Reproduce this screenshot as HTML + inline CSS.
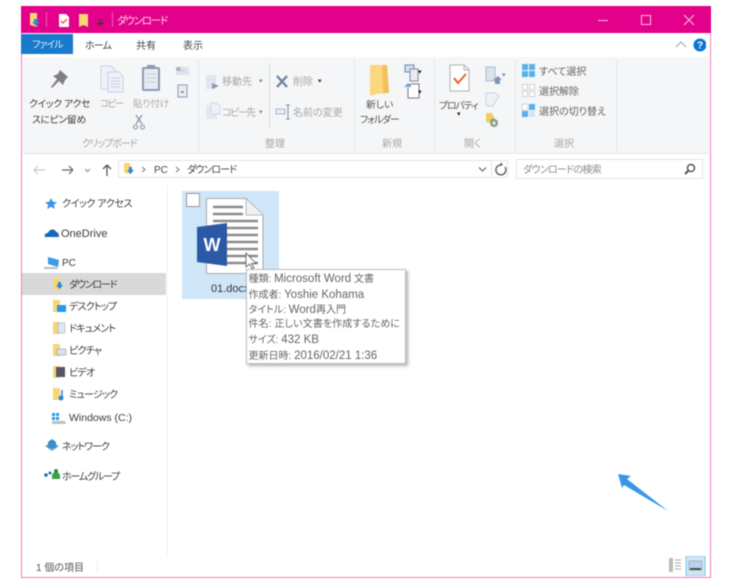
<!DOCTYPE html>
<html lang="ja"><head><meta charset="utf-8"><style>
html,body{margin:0;padding:0;background:#fff}
#p{position:relative;width:756px;height:586px;overflow:hidden;background:#fff;font-family:"Liberation Sans","Noto Sans CJK JP",sans-serif;font-size:10px;color:#444;filter:blur(.4px);font-feature-settings:"palt"}
#p div,#p svg{position:absolute}
.t{position:absolute;white-space:nowrap;line-height:14px;height:14px;margin-top:2px}
.g{color:#a8a8a8}.m{color:#8a8a8a}
.n{font-size:10px;color:#3c3c3c}
.k{letter-spacing:-.8px}
.l{font-size:11.500px}
</style></head><body><div id="p">
<div style="left:21px;top:6px;width:690px;height:572px;background:#fff;border-left:1.5px solid #ee7cc4;border-right:1.5px solid #ee7cc4;border-bottom:1.5px solid #ee7cc4;box-sizing:border-box"></div>
<div style="left:21px;top:6px;width:690px;height:27px;background:#e3008a"></div>
<div style="left:23px;top:57px;width:686px;height:96px;background:#f5f6f7;border-bottom:1px solid #e4e5e6"></div>
<div style="left:21px;top:34px;width:52px;height:20px;background:#1979ca"></div>
<div style="left:73px;top:33px;width:49px;height:25px;background:#fff"></div>
<div style="left:198px;top:60px;width:1px;height:92px;background:#e6e7e8"></div>
<div style="left:354px;top:60px;width:1px;height:92px;background:#e6e7e8"></div>
<div style="left:434px;top:60px;width:1px;height:92px;background:#e6e7e8"></div>
<div style="left:515px;top:60px;width:1px;height:92px;background:#e6e7e8"></div>
<div style="left:616px;top:60px;width:1px;height:92px;background:#e6e7e8"></div>
<div style="left:269px;top:64px;width:1px;height:65px;background:#dcdde0"></div>

<!-- title bar -->
<svg style="left:28px;top:12px" width="110" height="16" viewBox="0 0 110 16">
<path d="M2 1h7v14l-7-2z" fill="#f7d675"/><path d="M6 7h4v3h2l-4 4-4-4h2z" fill="#2a86d8"/>
<rect x="18" y="0" width="1" height="15" fill="#ee5db0"/>
<path d="M31 2h7l3 3v10H31z" fill="#fff"/><path d="M33 9l2 2 4-4" stroke="#e8602c" fill="none" stroke-width="1.400"/>
<path d="M51 2h9v13l-4.500-2-4.500 2z" fill="#fbd774"/>
<path d="M70 8h5M70 11l2.500 2 2.500-2z" stroke="#333" fill="#333"/>
<rect x="84" y="0" width="1" height="15" fill="#ee5db0"/>
</svg>
<span class="t" style="left:117px;top:12px;color:#fcd6ea;font-size:10.500px;letter-spacing:-1.200px">ダウンロード</span>
<svg style="left:590px;top:10px" width="115" height="20" viewBox="0 0 115 20" fill="none" stroke="#f9c3e0">
<path d="M8 10.500h10"/><rect x="51.500" y="5.500" width="9" height="9"/><path d="M94 5l10 10M104 5l-10 10"/>
</svg>

<!-- tabs -->
<span class="t" style="left:32px;top:37px;color:#dcecf9;font-size:10px;letter-spacing:-1px">ファイル</span>
<span class="t" style="left:85px;top:38px;font-size:10px;letter-spacing:-.9px">ホーム</span>
<span class="t" style="left:136px;top:38px;font-size:10px">共有</span>
<span class="t" style="left:183px;top:38px;font-size:10px">表示</span>
<svg style="left:674px;top:36px" width="32" height="18" viewBox="0 0 32 18">
<path d="M2 11l5-5 5 5" fill="none" stroke="#aaa" stroke-width="1.200"/>
<circle cx="26" cy="9" r="6.500" fill="#0a76d2"/><text x="26" y="12.500" font-size="10" font-weight="bold" fill="#fff" text-anchor="middle" font-family="Liberation Sans">?</text>
</svg>

<!-- clipboard icons -->
<svg style="left:22px;top:60px" width="180" height="76" viewBox="0 0 180 76">
<path d="M38 10l8 7-3 3-2 5-4-4-7 7-1-1 6-8-4-3 5-2z" fill="#7f8084"/>
<g fill="#eef2f8" stroke="#c6d2e2"><path d="M79 6h10l5 5v18H79z"/><path d="M86 12h11l4 4v16H86z"/></g>
<path d="M89 18h9M89 21h9M89 24h9M89 27h9" stroke="#c6d2e2"/>
<rect x="121" y="8" width="16" height="22" rx="1" fill="#e7ebf2" stroke="#8b9ab4" stroke-width="2"/>
<rect x="125" y="5" width="8" height="3" fill="#8b9ab4"/>
<path d="M124 14h10M124 18h10M124 22h10" stroke="#c6cfdd"/>
<rect x="154" y="7" width="13" height="8" fill="#dde3ec"/>
<rect x="156" y="25" width="9" height="12" fill="#e8edf4" stroke="#8b9ab4"/><path d="M159 32h3" stroke="#555"/>
<path d="M114 55l6 9M120 55l-6 9" stroke="#8290a8" stroke-width="1.200"/>
<circle cx="113.500" cy="67" r="2" fill="none" stroke="#8290a8"/><circle cx="120.500" cy="67" r="2" fill="none" stroke="#8290a8"/>
</svg>
<span class="t" style="left:176px;top:61px;font-size:5px;color:#667">W...</span>
<span class="t n" style="left:29px;top:96px;font-size:9.800px;letter-spacing:-.3px">クイック アクセ</span>
<span class="t n" style="left:32px;top:112px;font-size:9.800px;letter-spacing:-.3px">スにピン留め</span>
<span class="t g" style="left:100px;top:96px;font-size:9.500px;letter-spacing:-1.500px">コピー</span>
<span class="t g" style="left:133px;top:96px;font-size:9.500px">貼り付け</span>
<span class="t g" style="left:82px;top:136px;letter-spacing:-1px">クリップボード</span>

<!-- organize -->
<svg style="left:204px;top:72px" width="140" height="50" viewBox="0 0 140 50">
<path d="M2 3h10v14H2z" fill="#dfe6f0"/><path d="M8 11l7 3-7 3z" fill="#8b9ab4"/>
<path d="M73 4l10 11M83 4L73 15" stroke="#6f84a6" stroke-width="2.400"/>
<path d="M2 33h8l3 3v11H2z" fill="#e3e9f2"/><path d="M7 31h6l3 3v8H7z" fill="#eef2f8" stroke="#c6d2e2" stroke-width=".7"/>
<rect x="72" y="37" width="9" height="5" fill="#e6edf5" stroke="#a8b8cc"/><path d="M84 33v14M82 33h4M82 47h4" stroke="#7e90aa"/>
</svg>
<span class="t g" style="left:222px;top:74px">移動先</span><span class="t m" style="left:259px;top:73px;font-size:7px">▾</span>
<span class="t g" style="left:293px;top:74px">削除</span><span class="t" style="left:318px;top:73px;font-size:7px;color:#333">▾</span>
<span class="t g" style="left:222px;top:105px;letter-spacing:-1.500px">コピー先</span><span class="t m" style="left:259px;top:104px;font-size:7px">▾</span>
<span class="t g" style="left:293px;top:105px">名前の変更</span>
<span class="t g" style="left:265px;top:136px">整理</span>

<!-- new -->
<svg style="left:360px;top:60px" width="70" height="46" viewBox="0 0 70 46">
<path d="M10 5h17l2 28-13 1-6 2z" fill="#fbd87f"/><path d="M22 5h5l2 28h-6z" fill="#f1c259"/>
<rect x="45" y="5" width="9" height="7" fill="#cfe0f2" stroke="#6f88a8"/><rect x="50" y="9" width="8" height="12" fill="#e9edf2" stroke="#889"/>
<path d="M48 26l3-2h8v14H48z" fill="#fff" stroke="#778"/><path d="M45 27l3-3 3 3" stroke="#2a86d8" fill="none"/>
</svg>
<span class="t" style="left:418px;top:64px;font-size:7px;color:#222">▾</span>
<span class="t" style="left:418px;top:84px;font-size:7px;color:#222">▾</span>
<span class="t n" style="left:366px;top:97px;font-size:9.800px;color:#555">新しい</span>
<span class="t n" style="left:360px;top:112px;font-size:9.800px;color:#555;letter-spacing:-1px">フォルダー</span>
<span class="t g" style="left:382px;top:136px">新規</span>

<!-- open -->
<svg style="left:444px;top:62px" width="70" height="68" viewBox="0 0 70 68">
<path d="M6 3h14l5 5v21H6z" fill="#fff" stroke="#aeb0b2"/><path d="M20 3v5h5" fill="none" stroke="#aeb0b2"/>
<path d="M10 16l4 5 8-9" fill="none" stroke="#e8602c" stroke-width="2"/>
<rect x="42" y="5" width="9" height="14" fill="#dbe3ee" stroke="#a4b2c4" stroke-width=".8"/><path d="M49 18l5-4 4 4h-2v4h-5v-4z" fill="#7f95b5"/>
<path d="M42 31h9l4 3-6 10h-7z" fill="#edf2f8" stroke="#c6d2e2"/>
<path d="M42 51h6l3 6 1 5-10-2z" fill="#f2cc5e"/><circle cx="50" cy="61" r="4" fill="#8a9a8f"/><circle cx="50" cy="61" r="1.800" fill="#dbe8d4"/><path d="M47 58l3-1" stroke="#4caa4c"/>
</svg>
<span class="t m" style="left:502px;top:67px;font-size:7px">▾</span>
<span class="t n" style="left:439px;top:98px;font-size:9.800px;color:#555;letter-spacing:-1px">プロパティ</span>
<span class="t" style="left:457px;top:106px;font-size:7px;color:#222">▾</span>
<span class="t g" style="left:464px;top:136px">開く</span>

<!-- select -->
<svg style="left:521px;top:63px" width="16" height="56" viewBox="0 0 16 56">
<g fill="#5ab0ee"><rect x="1" y="1" width="6" height="6"/><rect x="8" y="1" width="6" height="6"/><rect x="1" y="8" width="6" height="6"/><rect x="8" y="8" width="6" height="6"/></g>
<g fill="#fff" stroke="#cfd2d6"><rect x="1.500" y="21.500" width="5" height="5"/><rect x="8.500" y="21.500" width="5" height="5"/><rect x="1.500" y="28.500" width="5" height="5"/><rect x="8.500" y="28.500" width="5" height="5"/></g>
<rect x="8" y="41" width="6" height="6" fill="#5ab0ee"/><rect x="1" y="48" width="6" height="6" fill="#5ab0ee"/><rect x="8" y="48" width="6" height="6" fill="#cfe6f8"/><rect x="1" y="41" width="6" height="6" fill="#fff" stroke="#cfd2d6"/>
</svg>
<span class="t" style="left:539px;top:64px;color:#666">すべて選択</span>
<span class="t" style="left:539px;top:84px;color:#666">選択解除</span>
<span class="t" style="left:539px;top:104px;color:#666">選択の切り替え</span>
<span class="t g" style="left:554px;top:136px">選択</span>

<!-- address row -->
<svg style="left:30px;top:162px" width="90" height="16" viewBox="0 0 90 16" fill="none">
<path d="M4 8h11M4 8l4-4M4 8l4 4" stroke="#c9c9c9" stroke-width="1.200"/>
<path d="M32 8h11M43 8l-4-4M43 8l-4 4" stroke="#666" stroke-width="1.200"/>
<path d="M55 7l2.500 2.500L60 7" stroke="#888"/>
<path d="M77 14V3M77 3l-4 4M77 3l4 4" stroke="#555" stroke-width="1.300"/>
</svg>
<div style="left:118px;top:160px;width:390px;height:18px;border:1px solid #e2e3e5;box-sizing:border-box;background:#fff"></div>
<div style="left:491px;top:160px;width:1px;height:18px;background:#e2e3e5"></div>
<svg style="left:122px;top:161px" width="60" height="16" viewBox="0 0 60 16" fill="none">
<path d="M2 2h6l1 11-7-1z" fill="#f7d675"/><path d="M7 6h3v3h2l-3.500 4L5 9h2z" fill="#2a86d8"/>
<path d="M20 6l3 2.500-3 2.500" stroke="#777"/><path d="M54 6l3 2.500-3 2.500" stroke="#777"/>
</svg>
<span class="t" style="left:154px;top:162px;color:#444">PC</span>
<span class="t" style="left:187px;top:162px;color:#444;letter-spacing:-.9px">ダウンロード</span>
<svg style="left:476px;top:161px" width="34" height="16" viewBox="0 0 34 16" fill="none">
<path d="M3 6.500l3.500 3.500L10 6.500" stroke="#666" stroke-width="1.200"/>
<path d="M29 6a5 5 0 1 1-3-2" stroke="#666" stroke-width="1.500"/><path d="M25 1l2 3-3 1z" fill="#666"/>
</svg>
<div style="left:516px;top:159px;width:187px;height:20px;border:1px solid #e2e3e5;box-sizing:border-box;background:#fff"></div>
<span class="t" style="left:523px;top:162px;color:#8c8c8c;letter-spacing:-.7px">ダウンロードの検索</span>
<svg style="left:683px;top:162px" width="14" height="14" viewBox="0 0 14 14" fill="none"><circle cx="8" cy="6" r="3.500" stroke="#555" stroke-width="1.500"/><path d="M5.500 8.500L2 12" stroke="#555" stroke-width="2"/></svg>

<!-- sidebar -->
<div style="left:167px;top:185px;width:1px;height:372px;background:#f0f0f0"></div>
<div style="left:22px;top:273px;width:144px;height:22px;background:#d9d9d9"></div>
<svg style="left:40px;top:192px" width="36" height="295" viewBox="0 0 36 295">
<path d="M11 6l1.800 3.800 4.200.4-3.200 2.700 1 4.100L11 14.800 7.200 17l1-4.100L5 10.200l4.200-.4z" fill="#3b93e6"/>
<path d="M5 45c-1-3 1-4 3-4 1-4 7-5 8-1 2 0 3 2 3 5z" fill="#1668b8"/>
<path d="M8 65l11 3-1 7-10-3z" fill="#3d9be0"/><path d="M4 75h13l1 2H4z" fill="#b8bcc2"/>
<path d="M13 86h7l1 12-8-1z" fill="#f7d675"/><path d="M18 90h3v3h2l-3.500 4-3.500-4h2z" fill="#2a86d8"/>
<path d="M13 108h7v12h-7z" fill="#f7d675"/><rect x="17" y="113" width="9" height="7" fill="#2a9ae8"/>
<path d="M13 130h7v12h-7z" fill="#f7d675"/><rect x="18" y="131" width="7" height="10" fill="#dde6ee" stroke="#8aa" stroke-width=".5"/>
<path d="M13 152h7v12h-7z" fill="#f7d675"/><rect x="17" y="157" width="9" height="6" fill="#d8e2ec" stroke="#789" stroke-width=".5"/>
<path d="M13 174h7v12h-7z" fill="#f7d675"/><rect x="16" y="175" width="9" height="10" fill="#556"/>
<path d="M13 196h7v12h-7z" fill="#f7d675"/><path d="M22 198v8" stroke="#2a86d8" stroke-width="1.500"/><circle cx="21" cy="206" r="2.500" fill="#2a86d8"/>
<rect x="12" y="221" width="3" height="3" fill="#2a9ae8"/><rect x="16" y="221" width="3" height="3" fill="#2a9ae8"/><rect x="12" y="225" width="3" height="3" fill="#2a9ae8"/><rect x="16" y="225" width="3" height="3" fill="#2a9ae8"/>
<path d="M12 229h13l1 3H12z" fill="#bcc0c4"/>
<path d="M5 254l7-4 7 4-7 5z" fill="#5cacdc"/><path d="M8 250l4-3 4 3v6H8z" fill="#3c8cc8"/>
<circle cx="6" cy="283" r="1.800" fill="#1b6fc0"/><circle cx="10" cy="281" r="1.500" fill="#1b6fc0"/><path d="M12 284a4 4 0 0 1 8 0v3h-8z" fill="#3aa04a"/><circle cx="16" cy="279" r="2" fill="#2b8f3c"/>
</svg>
<span class="t n" style="left:62px;top:196px;letter-spacing:-.4px">クイック アクセス</span>
<span class="t n" style="left:61px;top:225px;font-size:11px">OneDrive</span>
<span class="t n" style="left:62px;top:255px">PC</span>
<span class="t n k" style="left:69px;top:277px;letter-spacing:-1.200px">ダウンロード</span>
<span class="t n k" style="left:69px;top:299px">デスクトップ</span>
<span class="t n k" style="left:69px;top:321px">ドキュメント</span>
<span class="t n k" style="left:69px;top:343px">ピクチャ</span>
<span class="t n k" style="left:69px;top:365px">ビデオ</span>
<span class="t n k" style="left:69px;top:387px">ミュージック</span>
<span class="t n" style="left:69px;top:409px;font-size:10.500px">Windows (C:)</span>
<span class="t n k" style="left:62px;top:439px;letter-spacing:-1px">ネットワーク</span>
<span class="t n k" style="left:62px;top:469px;letter-spacing:-1.200px">ホームグループ</span>

<!-- file -->
<div style="left:182px;top:191px;width:97px;height:108px;background:#cfe6f9"></div>
<div style="left:186px;top:193px;width:12px;height:12px;background:#fff;border:1px solid #999"></div>
<svg style="left:195px;top:197px" width="70" height="78" viewBox="0 0 70 78">
<path d="M11.500 1.500H51L68 18v58.500H11.500z" fill="#fff" stroke="#a8a8a8"/>
<path d="M51 2v16h17" fill="#f0f0f0" stroke="#bbb"/>
<g stroke="#8c8c8c" stroke-width="2.400"><path d="M18 10h30M18 17h30M18 24h45M18 31h45M18 38h45M18 45h45M18 52h45M18 59h45M18 66h45"/></g>
<path d="M2 30l30-4v43L2 65z" fill="#2a5aa5"/>
<text x="17" y="54" fill="#fff" font-family="Liberation Sans" font-weight="bold" font-size="18" text-anchor="middle">W</text>
</svg>
<span class="t" style="left:211px;top:280px;font-size:11px;color:#333">01.docx</span>
<svg style="left:244px;top:252px" width="16" height="20" viewBox="0 0 16 20"><path d="M2 1v14l3.500-3 2.500 5 2-1-2.500-4.500H12z" fill="#fff" stroke="#555" stroke-width=".8"/></svg>

<!-- tooltip -->
<div style="left:246px;top:269px;width:160px;height:95px;background:#fff;border:1px solid #bdbdbd;box-sizing:border-box;box-shadow:2px 2px 3px rgba(0,0,0,.3)"></div>
<span class="t" style="left:248.500px;top:270px;color:#666">種類: <span class="l">Microsoft Word</span> 文書</span>
<span class="t" style="left:248.500px;top:286px;color:#666">作成者: <span class="l">Yoshie Kohama</span></span>
<span class="t" style="left:248.500px;top:301px;color:#666">タイトル: <span class="l">Word</span>再入門</span>
<span class="t" style="left:248.500px;top:316px;color:#666;letter-spacing:.1px">件名: 正しい文書を作成するために</span>
<span class="t" style="left:248.500px;top:331px;color:#666">サイズ: <span class="l">432 KB</span></span>
<span class="t" style="left:248.500px;top:347px;color:#666">更新日時: <span class="l">2016/02/21 1:36</span></span>

<!-- arrow -->
<svg style="left:610px;top:465px" width="65" height="55" viewBox="0 0 65 55"><path d="M8 9l13 2-4 3 41 32L14 20l-2 3z" fill="#3a96e4"/></svg>

<!-- status -->
<span class="t" style="left:36px;top:560px;color:#555">1 個の項目</span>
<div style="left:97px;top:560px;width:1px;height:13px;background:#eee"></div>
<svg style="left:668px;top:556px" width="40" height="20" viewBox="0 0 40 20">
<rect x="1" y="2" width="4" height="14" fill="#b9bcc0"/><path d="M7 4h6M7 7h6M7 10h6M7 13h6" stroke="#aaa"/>
<rect x="18" y="0" width="19" height="20" fill="#cde6f7" stroke="#7fc4ee"/>
<rect x="21" y="5" width="13" height="9" fill="#b9d2ee" stroke="#999" stroke-width=".6"/><path d="M22 12h11v2H22z" fill="#3c5a44"/>
</svg>
</div></body></html>
